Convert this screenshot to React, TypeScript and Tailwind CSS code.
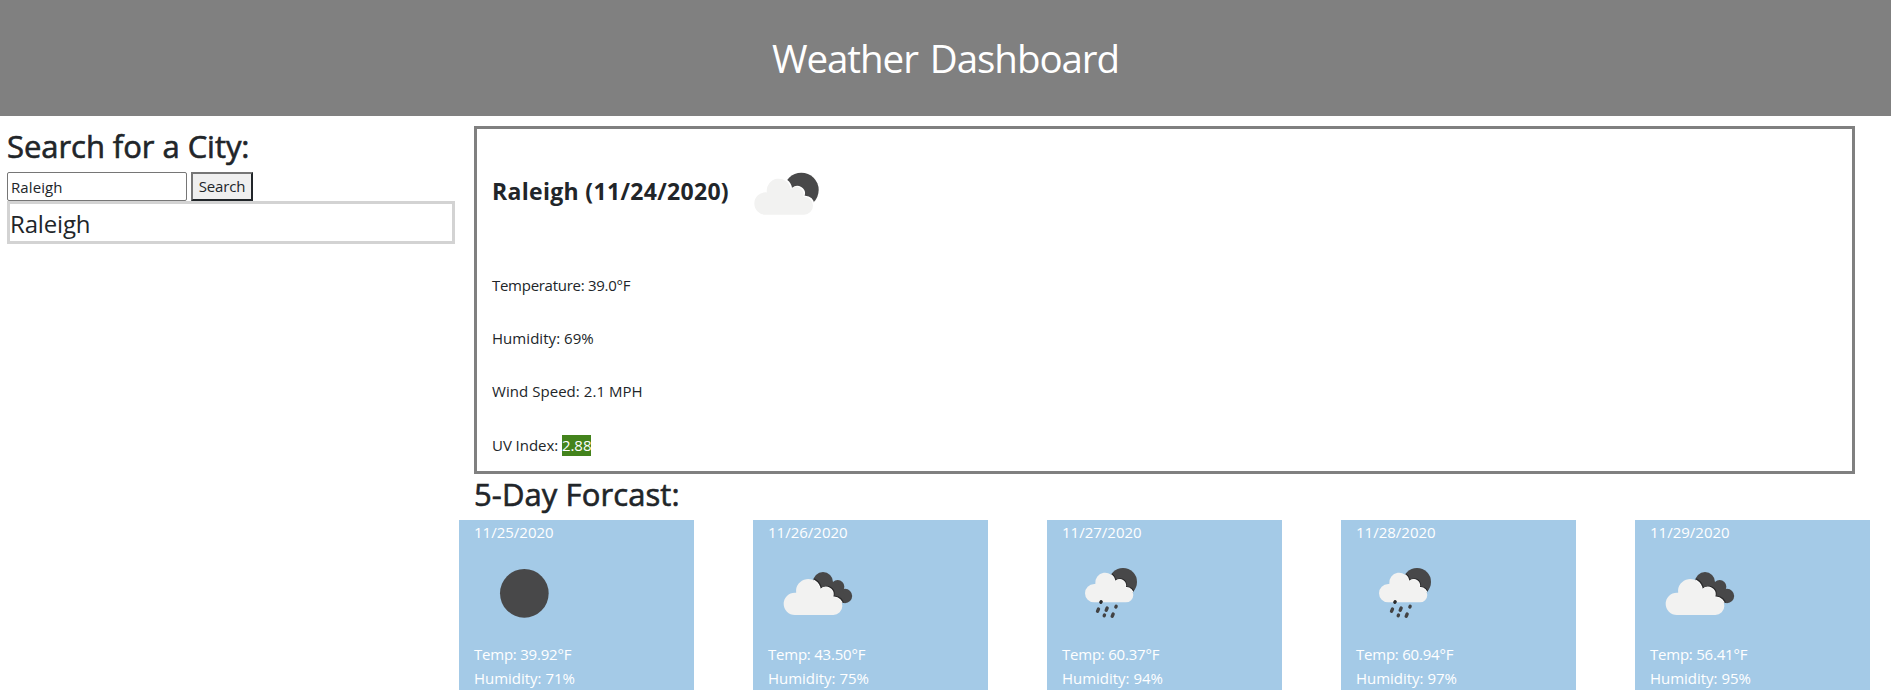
import { useState } from 'react';

type Sky = 'clear' | 'clouds' | 'rain';

const forecast: { date: string; sky: Sky; temp: string; humidity: string }[] = [
  { date: '11/25/2020', sky: 'clear', temp: '39.92', humidity: '71' },
  { date: '11/26/2020', sky: 'clouds', temp: '43.50', humidity: '75' },
  { date: '11/27/2020', sky: 'rain', temp: '60.37', humidity: '94' },
  { date: '11/28/2020', sky: 'rain', temp: '60.94', humidity: '97' },
  { date: '11/29/2020', sky: 'clouds', temp: '56.41', humidity: '95' },
];

// Front cloud, 176 x 111 units, its lower left corner at (131, 345).
const CLOUD =
  'M164.500 345a33.500 33.500 0 0 1 0-67q2 0 4 .3a36 36 0 1 1 71.500-10.300A23 23 0 0 1 278 291q1 0 2 0a27 27 0 0 1 0 54Z';

function Cloud({ fill = '#f2f2f1' }: { fill?: string }) {
  return <path d={CLOUD} fill={fill} />;
}

function PartlyCloudy() {
  return (
    <svg width="66" height="44" viewBox="0 0 198 132" className="block">
      <g transform="translate(-881 -187)">
        <circle cx="1023" cy="241" r="52" fill="#484849" />
        <g transform="translate(751 -30)">
          <g transform="translate(4 -3)"><Cloud fill="#fff" /></g>
          <Cloud />
        </g>
      </g>
    </svg>
  );
}

function SkyIcon({ sky }: { sky: Sky }) {
  return (
    <svg width="100" height="98" viewBox="0 0 300 294" className="block">
      {sky === 'clear' && <circle cx="151" cy="148" r="73" fill="#484849" />}
      {sky === 'clouds' && (
        <g transform="translate(-84 -132)">
          <g fill="#484849">
            <circle cx="249" cy="246" r="30" />
            <circle cx="293" cy="260" r="20" />
            <circle cx="315" cy="288" r="21.500" />
            <path d="M249 246l44 0 22 42-10 21-40-10z" />
          </g>
          <g clipPath="url(#rear)">
            <g transform="translate(5 -4)"><Cloud fill="#2a2a2b" /></g>
            <g transform="translate(2 -1.500)"><Cloud fill="#fff" /></g>
          </g>
          <Cloud />
          <defs>
            <clipPath id="rear">
              <circle cx="249" cy="246" r="30" />
              <circle cx="293" cy="260" r="20" />
              <circle cx="315" cy="288" r="21.500" />
              <path d="M249 246l44 0 22 42-10 21-40-10z" />
            </clipPath>
          </defs>
        </g>
      )}
      {sky === 'rain' && (
        <g transform="translate(-96 -132)">
          <circle cx="279" cy="246" r="42" fill="#484849" />
          <g transform="translate(165 307) scale(.823) translate(-131 -345)">
            <g clipPath="url(#moon)">
              <g transform="translate(5 -4)"><Cloud fill="#2a2a2b" /></g>
              <g transform="translate(2 -1.500)"><Cloud fill="#fff" /></g>
            </g>
            <Cloud />
            <defs>
              <clipPath id="moon">
                <circle cx="269.500" cy="271" r="51" />
              </clipPath>
            </defs>
          </g>
          <g stroke="#424243" strokeWidth="10" strokeLinecap="round">
            <path d="M212.500 307l1-2" stroke="#2a2a2b" />
            <path d="M202.500 334l3-7M228.500 331l3-7M246.500 349l3-7M257.500 321l1-2M222.500 347l1-2" />
          </g>
        </g>
      )}
    </svg>
  );
}

export default function App() {
  const [city, setCity] = useState('Raleigh');
  return (
    <div className="h-[700px] overflow-hidden bg-white font-['Open_Sans','Noto_Sans',sans-serif] text-[15px] leading-6 text-[#212529]">
      <header className="flex h-[116px] items-center justify-center bg-[#808080] pb-[1px]">
        <h1 className="text-[38.500px] leading-[48px] tracking-[-1.05px] [word-spacing:3px] text-white">Weather Dashboard</h1>
      </header>

      <div className="flex pt-2.5">
        <aside className="w-[455px] shrink-0 pl-[7px]">
          <h2 className="h-[46px] pt-[1px] text-[31px] font-medium leading-[38px] tracking-[-0.05px] [-webkit-text-stroke:0.6px_#212529]">Search for a City:</h2>
          <div className="flex gap-1">
            <input
              value={city}
              onChange={(e) => setCity(e.target.value)}
              className="h-[29px] w-[180px] rounded-[2px] border border-[#767676] bg-white px-[3px] text-[15px] tracking-[0.1px] outline-none"
            />
            <button className="h-[29px] w-[62px] border-2 border-b-[#212529] border-l-[#767676] border-r-[#212529] border-t-[#767676] bg-[#efefef] pb-px text-[15px] leading-6 tracking-[-0.2px]">
              Search
            </button>
          </div>
          <div className="h-[43px] border-[3px] border-[#d3d3d3] pt-0.5 text-[24px] leading-9 tracking-[-0.15px]">Raleigh</div>
        </aside>

        <main className="ml-[19px] w-[1396px] shrink-0">
          <section className="h-[348px] w-[1381px] border-[3px] border-[#808080] pl-[15px]">
            <div className="flex h-[129px] pt-[43px]">
              <h3 className="w-[262px] pt-[3px] text-[23px] font-bold leading-[32px] tracking-[0.32px]">Raleigh (11/24/2020)</h3>
              <PartlyCloudy />
            </div>
            <p className="mt-[15px] h-[53px] tracking-[-0.28px]">Temperature: 39.0°F</p>
            <p className="h-[53px] tracking-[0.05px]">Humidity: 69%</p>
            <p className="h-[54px] tracking-[0.05px]">Wind Speed: 2.1 MPH</p>
            <p className="tracking-[-0.05px]">
              UV Index: <span className="inline-block h-[21px] bg-[#43831c] leading-[21px] text-white">2.88</span>
            </p>
          </section>

          <h2 className="h-[46px] text-[31px] font-medium leading-[41px] tracking-[0.1px] [-webkit-text-stroke:0.6px_#212529]">5-Day Forcast:</h2>

          <div className="-ml-[15px] flex gap-[59px]">
            {forecast.map((d) => (
              <article key={d.date} className="h-[170px] w-[235px] shrink-0 bg-[#a4cae7] pl-[15px] text-white">
                <p className="tracking-[0px]">{d.date}</p>
                <SkyIcon sky={d.sky} />
                <p className="tracking-[-0.22px]">Temp: {d.temp}°F</p>
                <p className="tracking-[-0.02px]">Humidity: {d.humidity}%</p>
              </article>
            ))}
          </div>
        </main>
      </div>
    </div>
  );
}
